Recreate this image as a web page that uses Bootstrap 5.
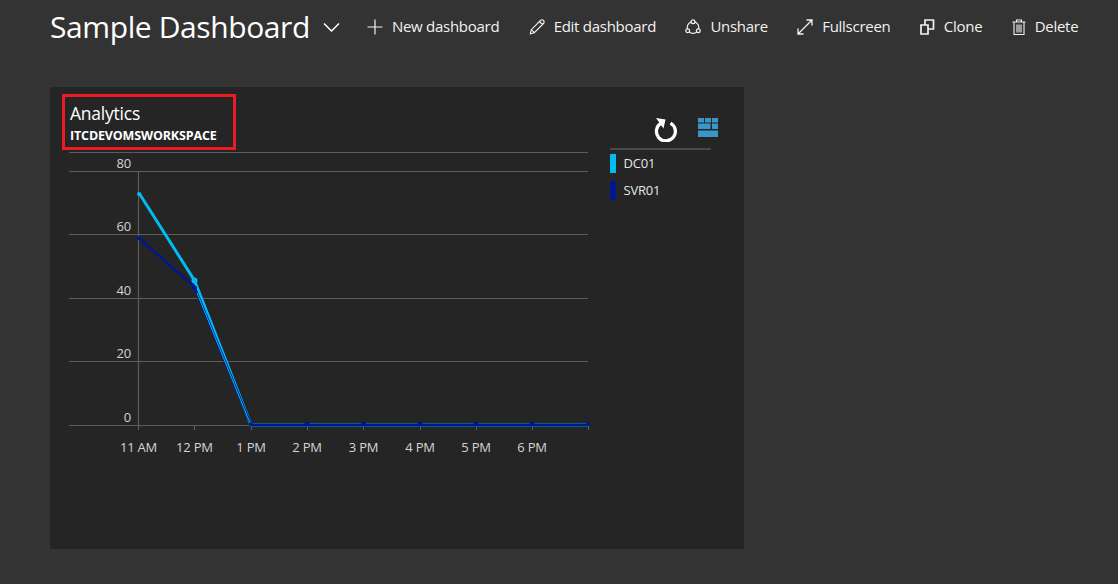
<!DOCTYPE html>
<html lang="en">
<head>
<meta charset="utf-8">
<title>Sample Dashboard</title>
<link rel="stylesheet" href="https://cdn.jsdelivr.net/npm/bootstrap@5.3.0/dist/css/bootstrap.min.css">
<style>
html,body{height:100%}
body{background:#333;color:#fff;font-family:"Open Sans","Noto Sans",sans-serif;overflow:hidden}
.dash-head{height:53px;padding:0 0 0 50px;white-space:nowrap}
.dash-title{font-size:30px;line-height:53px;font-weight:400;margin:0;letter-spacing:-.4px}
.dash-chev{margin:0 27px 0 13px}
.dash-act{font-size:15px;letter-spacing:-.27px;color:#f2f2f2;gap:9px;line-height:53px}
.dash-acts{gap:29.3px}
.dash-panel{width:694px;height:462px;margin:34px 0 0 50px;background:#252525}
.dash-left{width:548px;padding:7px 0 0 12px}
.red-box{width:174px;height:56px;border:3px solid #ed1c24;padding:5px 0 0 5px}
.red-title{font-size:17.5px;line-height:22px;letter-spacing:-.22px}
.red-sub{font-size:12.5px;font-weight:700;line-height:16px;letter-spacing:-.15px;margin-top:4px;white-space:nowrap}
.chart-svg{display:block;margin-left:-12px}
.chart-svg text{font-family:"Open Sans","Noto Sans",sans-serif;font-size:13px;fill:#d4d4d4;letter-spacing:-.2px}
.dash-right{width:101px;margin-left:12px}
.tool-row{height:63px;padding:31px 0 0 44px;border-bottom:2px solid #4a4a4a;gap:20px}
.leg-list{padding-top:4px;gap:8px}
.leg-row{font-size:13px;letter-spacing:-.2px;color:#e6e6e6;height:19px;gap:7.500px}
.leg-swatch{width:6px;height:19px}
.leg-dc{background:#00bcf2}
.leg-svr{background:#00188f}
</style>
</head>
<body>
<header class="dash-head d-flex align-items-center">
  <h1 class="dash-title flex-shrink-0">Sample Dashboard</h1>
  <svg class="dash-chev flex-shrink-0" width="17" height="10" viewBox="0 0 17 10" fill="none" stroke="#fff" stroke-width="1.5"><path d="M1 1.500l7.500 7.500 7.500-7.500"/></svg>
  <div class="dash-acts d-flex align-items-center flex-shrink-0">
    <div class="dash-act d-flex align-items-center">
      <svg width="16" height="16" viewBox="0 0 16 16" fill="none" stroke="#f2f2f2" stroke-width="1.200"><path d="M8 .5v15M.5 8h15"/></svg>New dashboard</div>
    <div class="dash-act d-flex align-items-center">
      <svg width="16" height="16" viewBox="0 0 16 16" fill="none" stroke="#f2f2f2" stroke-width="1.100"><path d="M1.300 14.700l1-4L11.500 1.500a1.600 1.600 0 0 1 3 3L5.300 13.700zM2.300 10.700l3 3M10.500 2.500l3 3"/></svg>Edit dashboard</div>
    <div class="dash-act d-flex align-items-center">
      <svg width="16" height="16" viewBox="0 0 16 16" fill="none" stroke="#f2f2f2" stroke-width="1.200"><circle cx="8" cy="8.500" r="5.800"/><g fill="#333"><circle cx="8" cy="2.700" r="1.900"/><circle cx="2.700" cy="11.800" r="1.900"/><circle cx="13.300" cy="11.800" r="1.900"/></g></svg>Unshare</div>
    <div class="dash-act d-flex align-items-center">
      <svg width="16" height="16" viewBox="0 0 16 16" fill="none" stroke="#f2f2f2" stroke-width="1.300"><path d="M1 15L15 1M9.500 1H15v5.500M1 9.500V15h5.500"/></svg>Fullscreen</div>
    <div class="dash-act d-flex align-items-center">
      <svg width="15" height="16" viewBox="0 0 15 16" fill="none" stroke="#f2f2f2" stroke-width="1.700"><path d="M1 6h7v9H1zM5 6V1h8.500v9H8"/></svg>Clone</div>
    <div class="dash-act d-flex align-items-center">
      <svg width="14" height="16" viewBox="0 0 14 16" fill="none" stroke="#f2f2f2" stroke-width="1.100"><path d="M.5 3h13M4.500 3V1h5v2M2 3v12.500h10V3M5 5.500v8M7 5.500v8M9 5.500v8"/></svg>Delete</div>
  </div>
</header>
<main class="dash-panel d-flex">
  <div class="dash-left flex-shrink-0">
    <div class="red-box">
      <div class="red-title">Analytics</div>
      <div class="red-sub">ITCDEVOMSWORKSPACE</div>
    </div>
    <svg class="chart-svg" width="548" height="330" viewBox="50 150 548 330">
      <g stroke="#5c5c5c" stroke-width="1.200" fill="none">
        <path d="M69 152.500H588M69 171.500H588M69 234.500H588M69 298.500H588M69 361.500H588M69 425.500H588"/>
        <path d="M138.500 171V430M194.500 425V430M251.500 425V430M307.500 425V430M363.500 425V430M420.500 425V430M476.500 425V430M532.500 425V430M588.500 425V430"/>
      </g>
      <path d="M139 193L194.500 280.500L251 425H588" fill="none" stroke="#00bcf2" stroke-width="3"/>
      <path d="M139 238L194.500 287L251 425H588" fill="none" stroke="#00188f" stroke-width="2.500"/>
      <path d="M197 293L250 423" fill="none" stroke="#00bcf2" stroke-width="1"/>
      <g fill="#00bcf2"><circle cx="139" cy="194" r="2"/><circle cx="194.500" cy="280.500" r="3"/></g>
      <g fill="#00188f"><circle cx="139" cy="238" r="2"/><circle cx="194.500" cy="288" r="2.500"/><circle cx="251" cy="424.500" r="2"/><circle cx="307" cy="424" r="2.500"/><circle cx="363.500" cy="424" r="2.500"/><circle cx="420" cy="424" r="2.500"/><circle cx="476" cy="424" r="2.500"/><circle cx="532" cy="424" r="2.500"/><circle cx="588" cy="424" r="2"/></g>
      <g text-anchor="end">
        <text x="131" y="168">80</text><text x="131" y="231">60</text><text x="131" y="295">40</text><text x="131" y="358">20</text><text x="131" y="422">0</text>
      </g>
      <g text-anchor="middle">
        <text x="138.500" y="452">11 AM</text><text x="194.500" y="452">12 PM</text><text x="251" y="452">1 PM</text><text x="307" y="452">2 PM</text><text x="363.500" y="452">3 PM</text><text x="420" y="452">4 PM</text><text x="476" y="452">5 PM</text><text x="532" y="452">6 PM</text>
      </g>
    </svg>
  </div>
  <aside class="dash-right flex-shrink-0">
    <div class="tool-row d-flex align-items-start">
      <svg class="flex-shrink-0" width="24" height="24" viewBox="0 0 24 24" fill="none"><path d="M6.800 5.400a9.500 9.500 0 1 0 9.700-.3" stroke="#fff" stroke-width="3.300"/><path fill="#fff" d="M2 0l9.500 1.500-2 9z"/></svg>
      <svg class="flex-shrink-0" width="20" height="19" viewBox="0 0 20 19" fill="#3a96c8"><path d="M0 0h6v4.500H0zM7 0h6v4.500H7zM14 0h6v4.500h-6zM0 5.500h12.500V11H0zM14 5.500h6V11h-6zM0 12.500h20V19H0z"/></svg>
    </div>
    <div class="leg-list d-flex flex-column">
      <div class="leg-row d-flex align-items-center"><span class="leg-swatch leg-dc"></span>DC01</div>
      <div class="leg-row d-flex align-items-center"><span class="leg-swatch leg-svr"></span>SVR01</div>
    </div>
  </aside>
</main>
<script src="https://cdn.jsdelivr.net/npm/bootstrap@5.3.0/dist/js/bootstrap.bundle.min.js"></script>
</body>
</html>
